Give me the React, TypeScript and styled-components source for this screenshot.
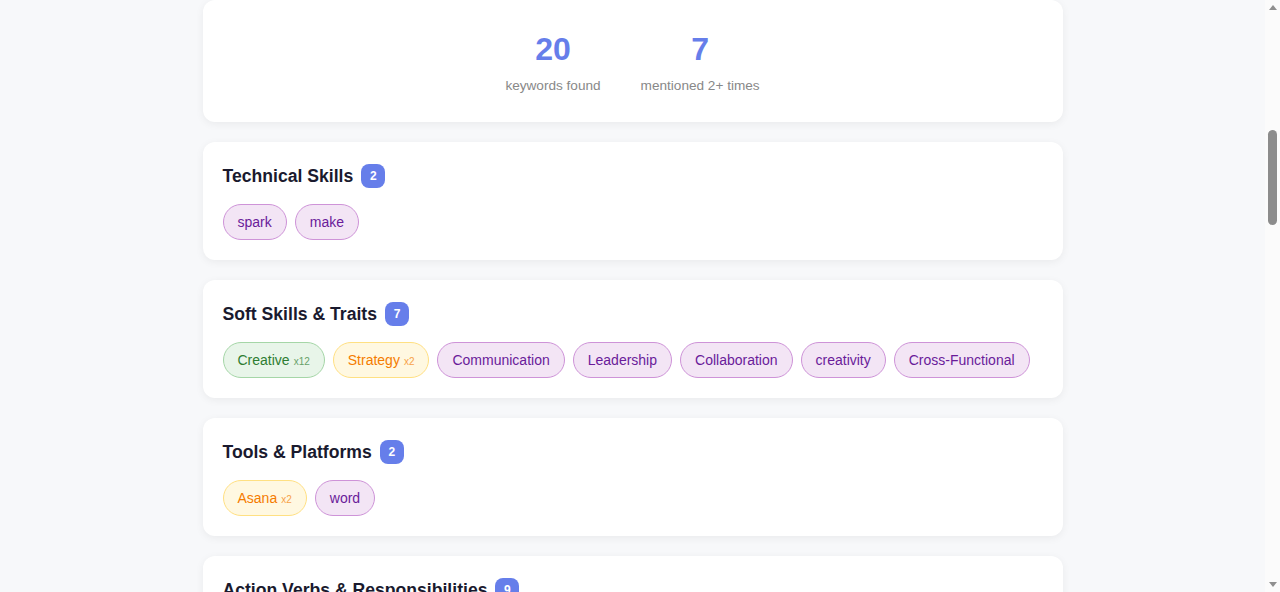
import styled, { createGlobalStyle } from "styled-components";

const GlobalStyle = createGlobalStyle`
  * {
    box-sizing: border-box;
  }
  body {
    margin: 0;
    background: #f7f8fa;
    font-family: "Liberation Sans", Arial, sans-serif;
    color: #1a1a2e;
  }
`;

const Shell = styled.div`
  display: flex;
  height: 100vh;
  overflow: hidden;
`;

const Main = styled.main`
  flex: 1;
  overflow: hidden;
`;

const Page = styled.div`
  max-width: 860px;
  margin: 0 auto;
  display: flex;
  flex-direction: column;
  gap: 20px;
`;

// fake browser scrollbar, the page in the shot is scrolled down a bit
const ScrollBar = styled.div`
  width: 15px;
  flex-shrink: 0;
  display: flex;
  flex-direction: column;
  align-items: center;
  background: #fbfbfb;
`;

const Arrow = styled.div<{ $down?: boolean }>`
  width: 15px;
  height: 15px;
  display: flex;
  align-items: center;
  justify-content: center;

  &::after {
    content: "";
    width: 0;
    height: 0;
    border-left: 4.5px solid transparent;
    border-right: 4.5px solid transparent;
    ${(p) =>
      p.$down
        ? "border-top: 5px solid #8f8f8f;"
        : "border-bottom: 5px solid #8f8f8f;"}
  }
`;

const Track = styled.div`
  flex: 1;
  width: 100%;
  padding: 115px 3px 0 3px;
`;

const Thumb = styled.div`
  width: 9px;
  height: 95px;
  border-radius: 5px;
  background: #8c8c8c;
`;

const Card = styled.section`
  background: #fff;
  border-radius: 12px;
  box-shadow: 0 2px 8px rgba(0, 0, 0, 0.06);
  padding: 20px;
`;

const StatsCard = styled(Card)`
  display: flex;
  justify-content: center;
  gap: 40px;
  padding: 30px 20px 29px;
`;

const Stat = styled.div`
  display: flex;
  flex-direction: column;
  align-items: center;
  gap: 10px;
`;

const StatNumber = styled.div`
  font-size: 32px;
  line-height: 38px;
  font-weight: 700;
  color: #667eea;
`;

const StatLabel = styled.div`
  font-size: 13.6px;
  line-height: 15px;
  color: #888;
`;

const CategoryHead = styled.div`
  display: flex;
  align-items: center;
  gap: 8px;
  margin-bottom: 14px;
`;

const CategoryTitle = styled.h3`
  margin: 0;
  font-size: 17.6px;
  line-height: 28px;
  font-weight: 700;
  color: #1a1a2e;
`;

const Badge = styled.span`
  display: inline-flex;
  align-items: center;
  justify-content: center;
  min-width: 24px;
  height: 24px;
  padding: 0 6px;
  border-radius: 8px;
  background: #667eea;
  color: #fff;
  font-size: 12px;
  font-weight: 700;
`;

const Chips = styled.div`
  display: flex;
  flex-wrap: wrap;
  gap: 8px;
`;

type Tone = "high" | "mid" | "low";

const tones: Record<Tone, { bg: string; border: string; color: string }> = {
  high: { bg: "#e8f5e9", border: "#a5d6a7", color: "#2e7d32" },
  mid: { bg: "#fff8e1", border: "#ffe082", color: "#f57c00" },
  low: { bg: "#f3e5f5", border: "#ce93d8", color: "#6a1b9a" },
};

const Chip = styled.span<{ $tone: Tone }>`
  display: inline-block;
  height: 36px;
  padding: 9px 14px;
  font-size: 14px;
  line-height: 16px;
  white-space: nowrap;
  border-radius: 18px;
  border: 1px solid ${(p) => tones[p.$tone].border};
  background: ${(p) => tones[p.$tone].bg};
  color: ${(p) => tones[p.$tone].color};
`;

const Count = styled.span`
  margin-left: 4px;
  font-size: 10px;
  line-height: 1;
  opacity: 0.7;
`;

type Keyword = { word: string; count: number };

const categories: { title: string; total: number; keywords: Keyword[] }[] = [
  {
    title: "Technical Skills",
    total: 2,
    keywords: [
      { word: "spark", count: 1 },
      { word: "make", count: 1 },
    ],
  },
  {
    title: "Soft Skills & Traits",
    total: 7,
    keywords: [
      { word: "Creative", count: 12 },
      { word: "Strategy", count: 2 },
      { word: "Communication", count: 1 },
      { word: "Leadership", count: 1 },
      { word: "Collaboration", count: 1 },
      { word: "creativity", count: 1 },
      { word: "Cross-Functional", count: 1 },
    ],
  },
  {
    title: "Tools & Platforms",
    total: 2,
    keywords: [
      { word: "Asana", count: 2 },
      { word: "word", count: 1 },
    ],
  },
  {
    title: "Action Verbs & Responsibilities",
    total: 9,
    keywords: [],
  },
];

const toneFor = (count: number): Tone =>
  count >= 5 ? "high" : count >= 2 ? "mid" : "low";

function App() {
  return (
    <>
      <GlobalStyle />
      <Shell>
        <Main>
          <Page>
            <StatsCard>
              <Stat>
                <StatNumber>20</StatNumber>
                <StatLabel>keywords found</StatLabel>
              </Stat>
              <Stat>
                <StatNumber>7</StatNumber>
                <StatLabel>mentioned 2+ times</StatLabel>
              </Stat>
            </StatsCard>

            {categories.map((cat) => (
              <Card key={cat.title}>
                <CategoryHead>
                  <CategoryTitle>{cat.title}</CategoryTitle>
                  <Badge>{cat.total}</Badge>
                </CategoryHead>
                {cat.keywords.length > 0 && (
                  <Chips>
                    {cat.keywords.map((k) => (
                      <Chip key={k.word} $tone={toneFor(k.count)}>
                        {k.word}
                        {k.count > 1 && <Count>x{k.count}</Count>}
                      </Chip>
                    ))}
                  </Chips>
                )}
              </Card>
            ))}
          </Page>
        </Main>
        <ScrollBar>
          <Arrow />
          <Track>
            <Thumb />
          </Track>
          <Arrow $down />
        </ScrollBar>
      </Shell>
    </>
  );
}

export default App;
